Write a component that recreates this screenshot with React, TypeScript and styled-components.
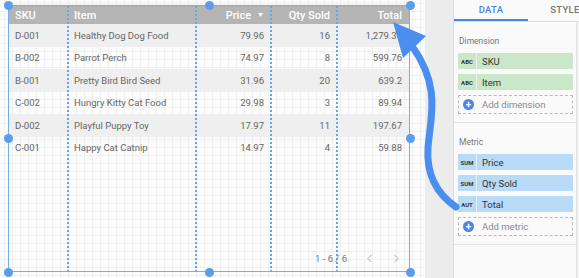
import React from "react";
import styled, { createGlobalStyle } from "styled-components";
import { ChevronLeft, ChevronRight } from "lucide-react";

const rows = [
  { sku: "D-001", item: "Healthy Dog Dog Food", price: "79.96", qty: "16", total: "1,279.36" },
  { sku: "B-002", item: "Parrot Perch", price: "74.97", qty: "8", total: "599.76" },
  { sku: "B-001", item: "Pretty Bird Bird Seed", price: "31.96", qty: "20", total: "639.2" },
  { sku: "C-002", item: "Hungry Kitty Cat Food", price: "29.98", qty: "3", total: "89.94" },
  { sku: "D-002", item: "Playful Puppy Toy", price: "17.97", qty: "11", total: "197.67" },
  { sku: "C-001", item: "Happy Cat Catnip", price: "14.97", qty: "4", total: "59.88" },
];

const cols = "59px 128px 75px 66px 1fr";
const guides = [58, 186, 261, 327];
const handles = [
  [0, 0], [201, 0], [402, 0],
  [0, 133], [402, 133],
  [0, 267], [201, 267], [402, 267],
];

const dimensions = [
  { tag: "ABC", name: "SKU" },
  { tag: "ABC", name: "Item" },
];
const metrics = [
  { tag: "SUM", name: "Price" },
  { tag: "SUM", name: "Qty Sold" },
  { tag: "AUT", name: "Total" },
];

const App = () => {
  return (
    <Page>
      <GlobalStyle />
      <Canvas>
        <Frame>
          <Header>
            <Cell>SKU</Cell>
            <Cell>Item</Cell>
            <Cell align="right">
              Price <Caret>▼</Caret>
            </Cell>
            <Cell align="right">Qty Sold</Cell>
            <Cell align="right">Total</Cell>
          </Header>
          {rows.map((r, i) => (
            <Row key={r.sku} shaded={i % 2 === 0}>
              <Cell>{r.sku}</Cell>
              <Cell>{r.item}</Cell>
              <Cell align="right">{r.price}</Cell>
              <Cell align="right">{r.qty}</Cell>
              <Cell align="right">{r.total}</Cell>
            </Row>
          ))}
          <Pager>
            <span>1 - 6 / 6</span>
            <ChevronLeft size={13} strokeWidth={1.5} />
            <ChevronRight size={13} strokeWidth={1.5} />
          </Pager>
          {guides.map((x) => (
            <Guide key={x} style={{ left: x }} />
          ))}
          {handles.map(([x, y]) => (
            <Handle key={`${x}-${y}`} style={{ left: x, top: y }} />
          ))}
        </Frame>
      </Canvas>
      <Gutter />
      <Panel>
        <Tabs>
          <Tab active>DATA</Tab>
          <Tab>STYLE</Tab>
        </Tabs>
        <Body>
          <Section>
            <Label>Dimension</Label>
            {dimensions.map((d) => (
              <Chip key={d.name} kind="dim">
                <Tag>{d.tag}</Tag>
                <ChipName>{d.name}</ChipName>
              </Chip>
            ))}
            <AddBox>
              <Plus>+</Plus>
              Add dimension
            </AddBox>
          </Section>
          <Section>
            <Label>Metric</Label>
            {metrics.map((m) => (
              <Chip key={m.name} kind="metric">
                <Tag>{m.tag}</Tag>
                <ChipName>{m.name}</ChipName>
              </Chip>
            ))}
            <AddBox>
              <Plus>+</Plus>
              Add metric
            </AddBox>
          </Section>
        </Body>
      </Panel>
      <Arrow width="579" height="278" viewBox="0 0 579 278">
        <path
          d="M 456 207 C 440 196, 426 178, 428 148 C 430 118, 442 88, 412 46"
          fill="none"
          stroke="#4a8ff0"
          strokeWidth="7"
          strokeLinecap="round"
        />
        <polygon points="393,22 426,36 403,58" fill="#4a8ff0" />
      </Arrow>
    </Page>
  );
};

export default App;

const GlobalStyle = createGlobalStyle`
  body {
    margin: 0;
    font-family: Roboto, "Liberation Sans", sans-serif;
  }
`;

const Page = styled.div`
  position: relative;
  width: 579px;
  height: 278px;
  display: flex;
  overflow: hidden;
  background: #fff;
`;

const Canvas = styled.div`
  width: 425px;
  flex-shrink: 0;
  padding: 5px 0 0 8px;
  box-sizing: border-box;
  background-color: #fcfcfc;
  background-image: linear-gradient(#efefef 1px, transparent 1px),
    linear-gradient(90deg, #efefef 1px, transparent 1px);
  background-size: 8px 8px;
  background-position: 4px 3px;
`;

const Frame = styled.div`
  position: relative;
  width: 402px;
  height: 267px;
  border: 1.5px solid #76adec;
  box-sizing: border-box;
  display: flex;
  flex-direction: column;
`;

const Header = styled.div`
  display: grid;
  grid-template-columns: ${cols};
  height: 18px;
  background: #b5b5b5;
  color: #fff;
  font-size: 11px;
  font-weight: 500;
`;

const Row = styled.div<{ shaded: boolean }>`
  display: grid;
  grid-template-columns: ${cols};
  height: 22.5px;
  background: ${(p) => (p.shaded ? "#efefef" : "transparent")};
  color: #666;
  font-size: 9.5px;
`;

const Cell = styled.div<{ align?: string }>`
  display: flex;
  align-items: center;
  justify-content: ${(p) => (p.align === "right" ? "flex-end" : "flex-start")};
  padding: 0 7px 0 6px;
  white-space: nowrap;
  overflow: hidden;
`;

const Caret = styled.span`
  font-size: 7px;
  margin-left: 6px;
`;

const Pager = styled.div`
  margin-top: auto;
  height: 26px;
  display: flex;
  align-items: center;
  justify-content: flex-end;
  gap: 14px;
  padding-right: 6px;
  color: #777;
  font-size: 9.5px;
  span {
    margin-right: 2px;
  }
  svg {
    color: #999;
  }
`;

const Guide = styled.div`
  position: absolute;
  top: 0;
  bottom: 0;
  width: 1.5px;
  background: repeating-linear-gradient(
    to bottom,
    #62a4ee 0 2px,
    transparent 2px 4px
  );
`;

const Handle = styled.div`
  position: absolute;
  width: 9px;
  height: 9px;
  margin: -5px 0 0 -5px;
  border-radius: 50%;
  background: #5b9de9;
`;

const Gutter = styled.div`
  width: 28px;
  flex-shrink: 0;
  background: #ececec;
`;

const Panel = styled.div`
  flex: 1;
  display: flex;
  flex-direction: column;
  background: #f3f3f3;
  border-left: 1px solid #dcdcdc;
  font-family: Roboto, "Liberation Sans", sans-serif;
`;

const Tabs = styled.div`
  display: flex;
  height: 21px;
  background: #fafafa;
  border-bottom: 1px solid #e0e0e0;
`;

const Tab = styled.div<{ active?: boolean }>`
  width: 74px;
  flex-shrink: 0;
  display: flex;
  align-items: center;
  justify-content: center;
  font-size: 9.5px;
  font-weight: 500;
  letter-spacing: 0.3px;
  color: ${(p) => (p.active ? "#4a86e0" : "#777")};
  border-bottom: 2px solid ${(p) => (p.active ? "#4a86e0" : "transparent")};
`;

const Body = styled.div`
  width: 122px;
  background: #fafafa;
  border-right: 1px solid #e2e2e2;
  flex: 1;
`;

const Section = styled.div`
  padding: 11px 3px 8px 4px;
  border-bottom: 1px solid #e2e2e2;
  display: flex;
  flex-direction: column;
  gap: 5px;
`;

const Label = styled.div`
  font-size: 8.5px;
  color: #777;
  margin: 3px 0 2px 1px;
`;

const Chip = styled.div<{ kind: "dim" | "metric" }>`
  height: 16px;
  display: flex;
  align-items: center;
  background: ${(p) => (p.kind === "dim" ? "#cbe7c9" : "#b9dbf7")};
  color: #333;
`;

const Tag = styled.div`
  width: 18px;
  height: 100%;
  display: flex;
  align-items: center;
  justify-content: center;
  font-size: 6px;
  font-weight: 700;
  color: #333;
  border-right: 1px solid rgba(255, 255, 255, 0.6);
`;

const ChipName = styled.div`
  padding-left: 5px;
  font-size: 9.5px;
`;

const AddBox = styled.div`
  height: 17px;
  display: flex;
  align-items: center;
  gap: 8px;
  padding-left: 4px;
  border: 1px dashed #bbb;
  font-size: 9.5px;
  color: #888;
`;

const Plus = styled.div`
  width: 11px;
  height: 11px;
  border-radius: 50%;
  background: #4a86e8;
  color: #fff;
  font-size: 10px;
  font-weight: 700;
  line-height: 11px;
  text-align: center;
`;

const Arrow = styled.svg`
  position: absolute;
  left: 0;
  top: 0;
  pointer-events: none;
`;
